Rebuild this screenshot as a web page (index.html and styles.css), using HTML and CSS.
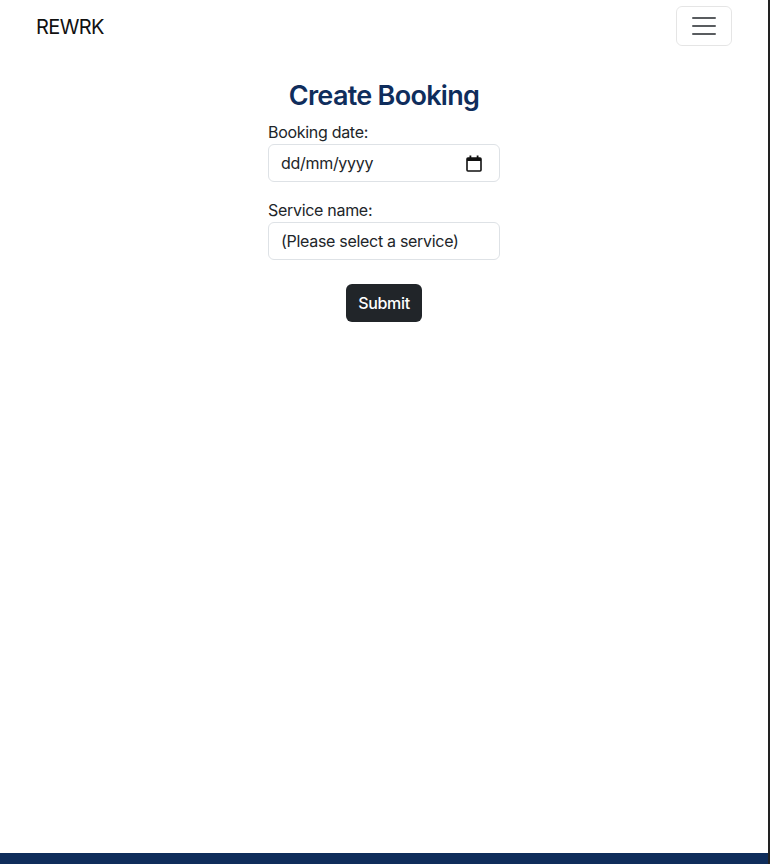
FILE: index.html
```html
<!DOCTYPE html>
<html lang="en">
<head>
<meta charset="utf-8">
<title>Create Booking</title>
<link rel="stylesheet" href="styles.css">
</head>
<body>
<div class="page">
  <nav class="navbar">
    <span class="brand">REWRK</span>
    <button class="toggler" type="button" aria-label="Toggle navigation">
      <svg class="toggler-icon" width="30" height="30" viewBox="0 0 30 30">
        <path d="M4 7h22M4 15h22M4 23h22" stroke="rgba(33,37,41,0.75)" stroke-width="2" stroke-linecap="round"/>
      </svg>
    </button>
  </nav>
  <main class="content">
    <h3 class="title">Create Booking</h3>
    <form class="form">
      <div class="field">
        <label class="label">Booking date:</label>
        <div class="input">
          <span>dd/mm/yyyy</span>
          <svg class="cal" width="16" height="17" viewBox="0 0 16 17">
            <rect x="1" y="3" width="14" height="13" rx="1" fill="none" stroke="#111" stroke-width="1.6"/>
            <rect x="1" y="3" width="14" height="3" fill="#111"/>
            <rect x="3.5" y="0.5" width="1.8" height="3" fill="#111"/>
            <rect x="10.7" y="0.5" width="1.8" height="3" fill="#111"/>
          </svg>
        </div>
      </div>
      <div class="field">
        <label class="label">Service name:</label>
        <div class="input"><span>(Please select a service)</span></div>
      </div>
      <div class="actions">
        <button class="btn" type="button">Submit</button>
      </div>
    </form>
  </main>
  <footer class="footer"></footer>
</div>
</body>
</html>
```
FILE: styles.css
```css
html, body {
  margin: 0;
  padding: 0;
  background: #222;
}
body {
  font-family: Inter, "Noto Sans", Roboto, sans-serif;
  color: #212529;
  font-size: 16px;
  line-height: 24px;
  letter-spacing: -0.3px;
}
.page {
  width: 768px;
  min-height: 864px;
  background: #fff;
  display: flex;
  flex-direction: column;
}
.navbar {
  display: flex;
  align-items: center;
  justify-content: space-between;
  padding: 6px 36px;
  height: 40px;
}
.brand {
  font-size: 20px;
  color: #111;
  letter-spacing: -0.6px;
  padding-top: 2px;
}
.toggler {
  width: 56px;
  height: 40px;
  border: 1px solid rgba(0,0,0,0.1);
  border-radius: 6px;
  background: transparent;
  padding: 4px 12px;
  display: flex;
  align-items: center;
  justify-content: center;
}
.content {
  flex: 1;
  display: flex;
  flex-direction: column;
  align-items: center;
  padding-top: 27px;
}
.title {
  margin: 0 0 7px;
  font-size: 27px;
  line-height: 34px;
  font-weight: 600;
  letter-spacing: -0.7px;
  color: #0f2d5c;
}
.form {
  width: 232px;
  display: flex;
  flex-direction: column;
  gap: 16px;
}
.field {
  display: flex;
  flex-direction: column;
}
.label {
  font-size: 16px;
  line-height: 24px;
}
.input {
  height: 38px;
  box-sizing: border-box;
  border: 1px solid #dee2e6;
  border-radius: 6px;
  padding: 0 12px;
  display: flex;
  align-items: center;
  justify-content: space-between;
  font-size: 16px;
  color: #212529;
}
.cal {
  margin-right: 5px;
}
.actions {
  display: flex;
  justify-content: center;
  padding-top: 8px;
}
.btn {
  height: 38px;
  padding: 0 12px;
  border: 0;
  border-radius: 6px;
  background: #212529;
  color: #fff;
  font-family: inherit;
  font-size: 16px;
  font-weight: 500;
  letter-spacing: -0.3px;
}
.footer {
  height: 11px;
  background: #0f2d5b;
}
```
